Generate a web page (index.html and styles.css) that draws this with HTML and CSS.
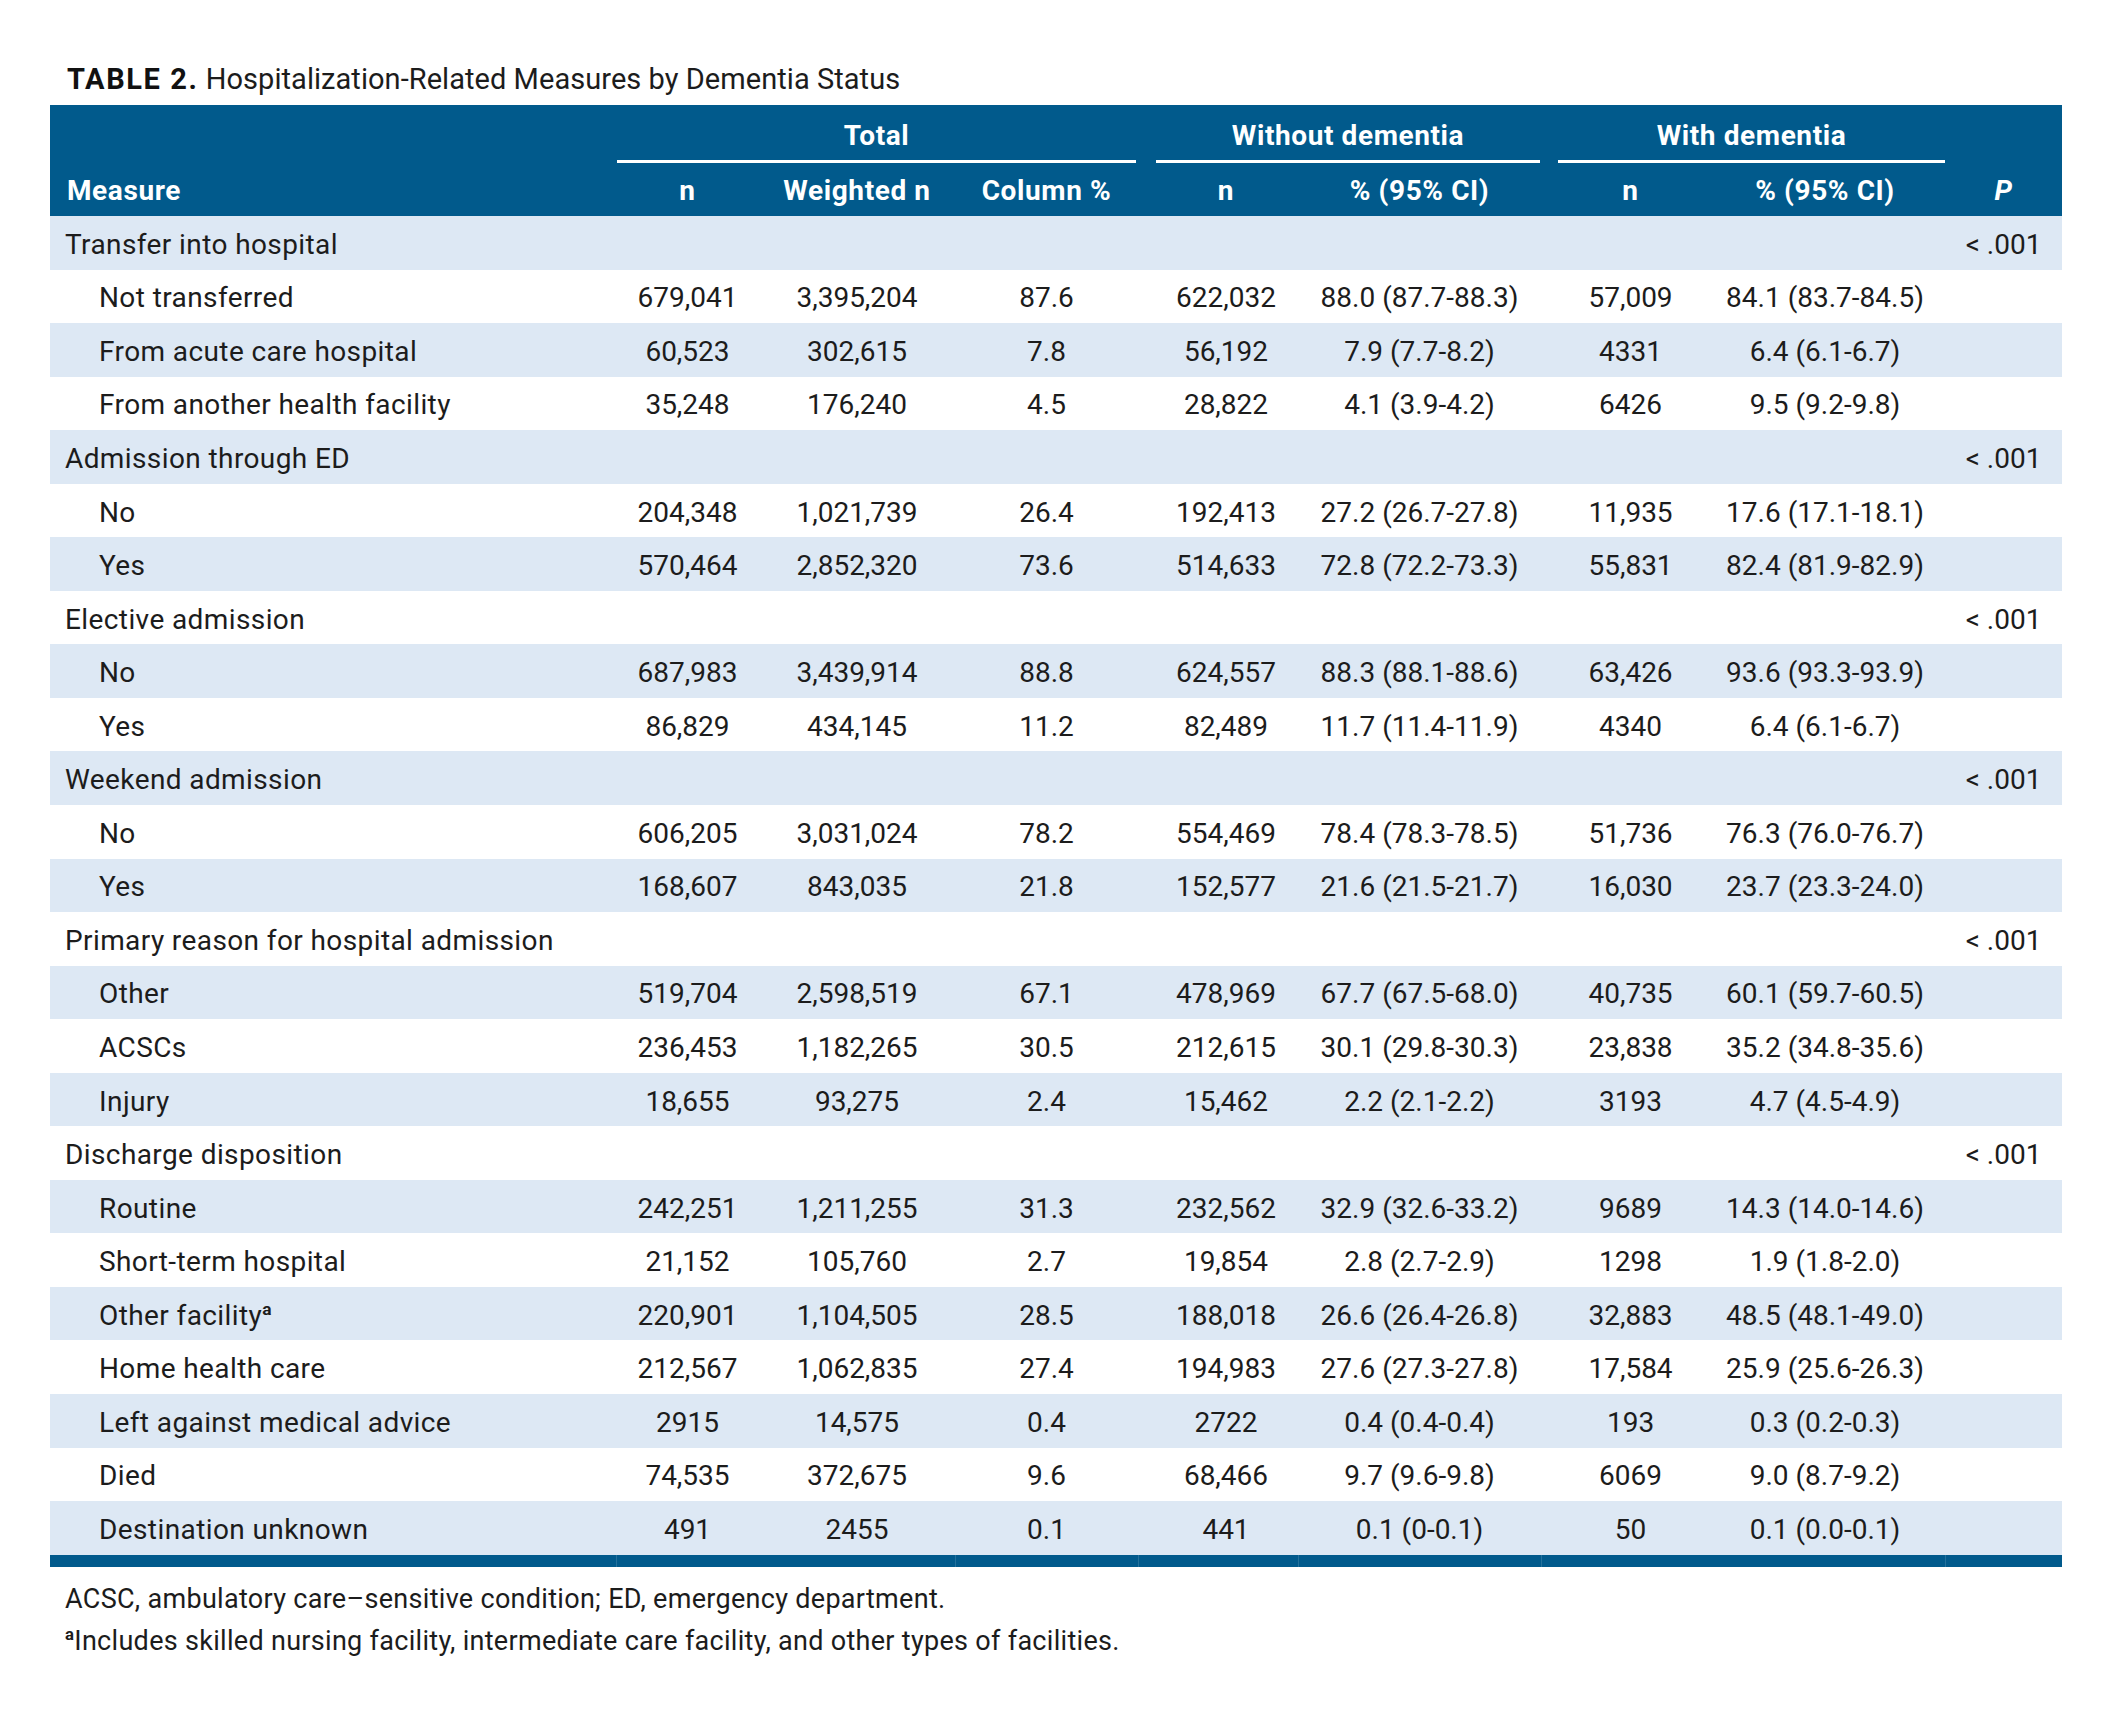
FILE: index.html
```html
<!DOCTYPE html>
<html lang="en">
<head>
<meta charset="utf-8">
<title>Table 2</title>
<link rel="stylesheet" href="styles.css">
</head>
<body>
<div class="page">
  <h1 class="title"><span class="title-label">TABLE 2.</span> Hospitalization-Related Measures by Dementia Status</h1>
  <table class="data">
    <colgroup>
      <col class="c-measure">
      <col class="c-tn">
      <col class="c-tw">
      <col class="c-tc">
      <col class="c-wn">
      <col class="c-wp">
      <col class="c-dn">
      <col class="c-dp">
      <col class="c-p">
    </colgroup>
    <thead>
      <tr class="groups">
        <th rowspan="2" class="measure">Measure</th>
        <th colspan="3" class="group"><div class="group-label g-total">Total</div></th>
        <th colspan="2" class="group"><div class="group-label g-without">Without dementia</div></th>
        <th colspan="2" class="group"><div class="group-label g-with">With dementia</div></th>
        <th rowspan="2" class="pval"><i>P</i></th>
      </tr>
      <tr class="subs">
        <th>n</th>
        <th>Weighted n</th>
        <th>Column %</th>
        <th>n</th>
        <th>% (95% CI)</th>
        <th>n</th>
        <th>% (95% CI)</th>
      </tr>
    </thead>
    <tbody>
      <tr class="cat"><td>Transfer into hospital</td><td></td><td></td><td></td><td></td><td></td><td></td><td></td><td>&lt; .001</td></tr>
      <tr><td>Not transferred</td><td>679,041</td><td>3,395,204</td><td>87.6</td><td>622,032</td><td>88.0 (87.7-88.3)</td><td>57,009</td><td>84.1 (83.7-84.5)</td><td></td></tr>
      <tr><td>From acute care hospital</td><td>60,523</td><td>302,615</td><td>7.8</td><td>56,192</td><td>7.9 (7.7-8.2)</td><td>4331</td><td>6.4 (6.1-6.7)</td><td></td></tr>
      <tr><td>From another health facility</td><td>35,248</td><td>176,240</td><td>4.5</td><td>28,822</td><td>4.1 (3.9-4.2)</td><td>6426</td><td>9.5 (9.2-9.8)</td><td></td></tr>
      <tr class="cat"><td>Admission through ED</td><td></td><td></td><td></td><td></td><td></td><td></td><td></td><td>&lt; .001</td></tr>
      <tr><td>No</td><td>204,348</td><td>1,021,739</td><td>26.4</td><td>192,413</td><td>27.2 (26.7-27.8)</td><td>11,935</td><td>17.6 (17.1-18.1)</td><td></td></tr>
      <tr><td>Yes</td><td>570,464</td><td>2,852,320</td><td>73.6</td><td>514,633</td><td>72.8 (72.2-73.3)</td><td>55,831</td><td>82.4 (81.9-82.9)</td><td></td></tr>
      <tr class="cat"><td>Elective admission</td><td></td><td></td><td></td><td></td><td></td><td></td><td></td><td>&lt; .001</td></tr>
      <tr><td>No</td><td>687,983</td><td>3,439,914</td><td>88.8</td><td>624,557</td><td>88.3 (88.1-88.6)</td><td>63,426</td><td>93.6 (93.3-93.9)</td><td></td></tr>
      <tr><td>Yes</td><td>86,829</td><td>434,145</td><td>11.2</td><td>82,489</td><td>11.7 (11.4-11.9)</td><td>4340</td><td>6.4 (6.1-6.7)</td><td></td></tr>
      <tr class="cat"><td>Weekend admission</td><td></td><td></td><td></td><td></td><td></td><td></td><td></td><td>&lt; .001</td></tr>
      <tr><td>No</td><td>606,205</td><td>3,031,024</td><td>78.2</td><td>554,469</td><td>78.4 (78.3-78.5)</td><td>51,736</td><td>76.3 (76.0-76.7)</td><td></td></tr>
      <tr><td>Yes</td><td>168,607</td><td>843,035</td><td>21.8</td><td>152,577</td><td>21.6 (21.5-21.7)</td><td>16,030</td><td>23.7 (23.3-24.0)</td><td></td></tr>
      <tr class="cat"><td>Primary reason for hospital admission</td><td></td><td></td><td></td><td></td><td></td><td></td><td></td><td>&lt; .001</td></tr>
      <tr><td>Other</td><td>519,704</td><td>2,598,519</td><td>67.1</td><td>478,969</td><td>67.7 (67.5-68.0)</td><td>40,735</td><td>60.1 (59.7-60.5)</td><td></td></tr>
      <tr><td>ACSCs</td><td>236,453</td><td>1,182,265</td><td>30.5</td><td>212,615</td><td>30.1 (29.8-30.3)</td><td>23,838</td><td>35.2 (34.8-35.6)</td><td></td></tr>
      <tr><td>Injury</td><td>18,655</td><td>93,275</td><td>2.4</td><td>15,462</td><td>2.2 (2.1-2.2)</td><td>3193</td><td>4.7 (4.5-4.9)</td><td></td></tr>
      <tr class="cat"><td>Discharge disposition</td><td></td><td></td><td></td><td></td><td></td><td></td><td></td><td>&lt; .001</td></tr>
      <tr><td>Routine</td><td>242,251</td><td>1,211,255</td><td>31.3</td><td>232,562</td><td>32.9 (32.6-33.2)</td><td>9689</td><td>14.3 (14.0-14.6)</td><td></td></tr>
      <tr><td>Short-term hospital</td><td>21,152</td><td>105,760</td><td>2.7</td><td>19,854</td><td>2.8 (2.7-2.9)</td><td>1298</td><td>1.9 (1.8-2.0)</td><td></td></tr>
      <tr><td>Other facility<sup class="fn">a</sup></td><td>220,901</td><td>1,104,505</td><td>28.5</td><td>188,018</td><td>26.6 (26.4-26.8)</td><td>32,883</td><td>48.5 (48.1-49.0)</td><td></td></tr>
      <tr><td>Home health care</td><td>212,567</td><td>1,062,835</td><td>27.4</td><td>194,983</td><td>27.6 (27.3-27.8)</td><td>17,584</td><td>25.9 (25.6-26.3)</td><td></td></tr>
      <tr><td>Left against medical advice</td><td>2915</td><td>14,575</td><td>0.4</td><td>2722</td><td>0.4 (0.4-0.4)</td><td>193</td><td>0.3 (0.2-0.3)</td><td></td></tr>
      <tr><td>Died</td><td>74,535</td><td>372,675</td><td>9.6</td><td>68,466</td><td>9.7 (9.6-9.8)</td><td>6069</td><td>9.0 (8.7-9.2)</td><td></td></tr>
      <tr><td>Destination unknown</td><td>491</td><td>2455</td><td>0.1</td><td>441</td><td>0.1 (0-0.1)</td><td>50</td><td>0.1 (0.0-0.1)</td><td></td></tr>
    </tbody>
    <tfoot>
      <tr><td></td><td class="sep"></td><td></td><td class="sep"></td><td class="sep"></td><td class="sep"></td><td class="sep"></td><td></td><td class="sep"></td></tr>
    </tfoot>
  </table>
  <div class="notes">
    <p>ACSC, ambulatory care–sensitive condition; ED, emergency department.</p>
    <p><sup class="fn">a</sup>Includes skilled nursing facility, intermediate care facility, and other types of facilities.</p>
  </div>
</div>
</body>
</html>
```

FILE: styles.css
```css
html, body {
  margin: 0;
  padding: 0;
  background: #ffffff;
}

body {
  font-family: Roboto, "Liberation Sans", Arial, sans-serif;
  color: #1c1c1c;
}

.page {
  padding: 62px 51px 0 50px;
}

.title {
  margin: 0 0 9px 0;
  padding-left: 17px;
  font-size: 29px;
  line-height: 34px;
  font-weight: 400;
  letter-spacing: 0.05px;
  color: #1c1c1c;
}

.title-label {
  font-weight: 700;
  letter-spacing: 1.6px;
  color: #111111;
}

.data {
  width: 2012px;
  table-layout: fixed;
  border-collapse: separate;
  border-spacing: 0;
  font-size: 28px;
  line-height: 34px;
}

.c-measure { width: 566px; }
.c-tn { width: 143px; }
.c-tw { width: 196px; }
.c-tc { width: 183px; }
.c-wn { width: 160px; }
.c-wp { width: 243px; }
.c-dn { width: 179px; }
.c-dp { width: 225px; }
.c-p { width: 117px; }

thead th {
  background: #015a8c;
  color: #ffffff;
  font-weight: 700;
  text-align: center;
  padding: 0;
  white-space: nowrap;
  letter-spacing: 0.6px;
}

.groups th {
  height: 58px;
  vertical-align: bottom;
}

.group-label {
  padding-bottom: 7px;
  border-bottom: 3px solid #ffffff;
}

.g-total { margin: 0 2px 0 1px; }
.g-without { margin: 0 1px 0 18px; }
.g-with { margin: 0 0 0 17px; }

.measure {
  text-align: left !important;
  vertical-align: bottom;
  padding: 0 0 8px 17px !important;
  height: 45px;
}

.pval {
  vertical-align: bottom;
  padding-bottom: 8px !important;
}

.subs th {
  height: 51px;
  vertical-align: middle;
  padding: 2px 0 0 0;
}

.subs th:nth-child(4) { padding-left: 16px; }
.subs th:nth-child(7) { padding-right: 15px; }

tbody td {
  height: 49.56px;
  padding: 4px 0 0 0;
  text-align: center;
  vertical-align: middle;
  white-space: nowrap;
}

tbody tr:nth-child(odd) td {
  background: #dde8f4;
}

tbody td:first-child {
  text-align: left;
  padding-left: 49px;
  letter-spacing: 0.4px;
}

tbody tr.cat td:first-child {
  padding-left: 15px;
}

tbody td:nth-child(5) { padding-left: 16px; }
tbody td:nth-child(8) { padding-right: 15px; }

.fn {
  font-size: 0.62em;
  font-weight: 700;
  vertical-align: 0.6em;
  line-height: 0;
}

tfoot td {
  height: 12px;
  padding: 0;
  background: #015a8c;
}

tfoot td.sep {
  box-shadow: inset 1px 0 0 rgba(255, 255, 255, 0.14);
}

.notes {
  padding: 11px 0 0 15px;
  font-size: 27px;
  line-height: 42px;
  letter-spacing: 0.3px;
  color: #1c1c1c;
}

.notes p {
  margin: 0;
}
```
